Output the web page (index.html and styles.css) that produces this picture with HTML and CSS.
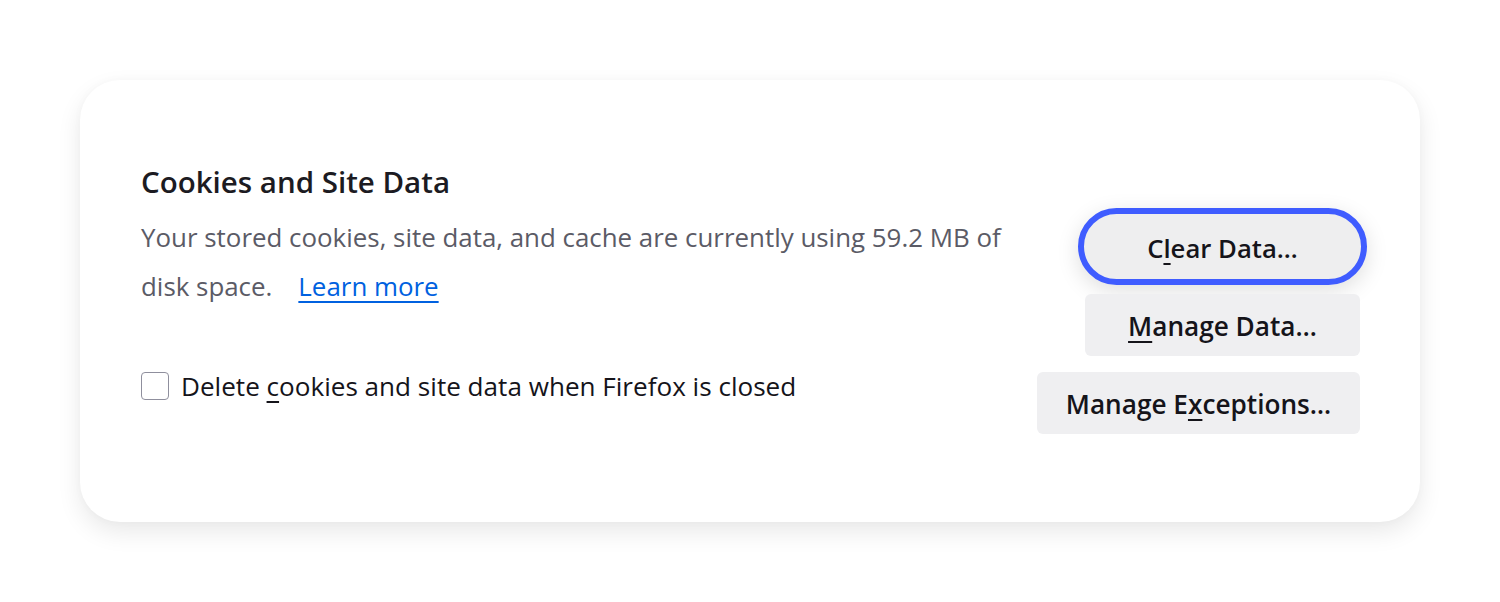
FILE: index.html
```html
<!DOCTYPE html>
<html lang="en">
<head>
<meta charset="utf-8">
<title>Cookies and Site Data</title>
<link rel="stylesheet" href="styles.css">
</head>
<body>
<div class="stage">
  <section class="card">
    <div class="info">
      <h2 class="title">Cookies and Site Data</h2>
      <p class="desc"><span class="desc-line">Your stored cookies, site data, and cache are currently using 59.2 MB of</span><span class="desc-line"><span>disk space.</span><a class="link" href="#">Learn more</a></span></p>
      <label class="check-row">
        <span class="checkbox"></span>
        <span class="check-label">Delete <u>c</u>ookies and site data when Firefox is closed</span>
      </label>
    </div>
    <div class="actions">
      <button class="btn btn-focus">C<u>l</u>ear Data…</button>
      <button class="btn btn-data"><u>M</u>anage Data…</button>
      <button class="btn btn-exc">Manage E<u>x</u>ceptions…</button>
    </div>
  </section>
</div>
</body>
</html>
```
FILE: styles.css
```css
html, body {
  margin: 0;
  padding: 0;
  background: #ffffff;
}
body {
  font-family: "Open Sans", "Noto Sans", sans-serif;
  color: #15141a;
  width: 1500px;
  height: 602px;
  overflow: hidden;
}
.stage {
  padding: 80px 80px 0 80px;
}
.card {
  box-sizing: border-box;
  height: 442px;
  background: #ffffff;
  border-radius: 40px;
  box-shadow: 0 10px 24px rgba(0, 0, 0, 0.09), 0 0 10px rgba(0, 0, 0, 0.025);
  padding: 84px 60px 0 61px;
  display: flex;
  justify-content: space-between;
  align-items: flex-start;
}
.info {
  width: 880px;
}
.title {
  margin: 0;
  font-size: 29.5px;
  font-weight: 600;
  line-height: 36px;
  color: #1c1b22;
}
.desc {
  margin: 13px 0 0 0;
  font-size: 25.9px;
  line-height: 49px;
  color: #5b5b66;
}
.desc-line {
  display: block;
}
.link {
  color: #0061e0;
  text-decoration: underline;
  text-decoration-thickness: 2px;
  text-underline-offset: 5px;
  margin-left: 26px;
}
.check-row {
  display: flex;
  align-items: center;
  gap: 12px;
  margin-top: 60px;
  height: 30px;
}
.checkbox {
  box-sizing: border-box;
  width: 28px;
  height: 28px;
  border: 1.5px solid #8f8f9d;
  border-radius: 4px;
  background: #ffffff;
  flex: none;
}
.check-label {
  font-size: 26.1px;
  color: #15141a;
}
.check-label u, .btn u {
  text-underline-offset: 5px;
  text-decoration-thickness: 2px;
}
.actions {
  display: flex;
  flex-direction: column;
  align-items: flex-end;
  padding-top: 44px;
}
.btn {
  box-sizing: border-box;
  font-family: "Open Sans", "Noto Sans", sans-serif;
  font-size: 26.2px;
  font-weight: 600;
  color: #15141a;
  background: #efeff1;
  border: none;
  border-radius: 6px;
  height: 62px;
  padding: 2px 0 0 0;
  cursor: pointer;
}
.btn-focus {
  width: 289px;
  height: 77px;
  margin-right: -7px;
  border: 6px solid #3f5cff;
  border-radius: 40px;
  background: #eeeeef;
  box-shadow: 0 6px 22px rgba(0, 0, 0, 0.13);
  font-size: 25.7px;
  padding: 4px 0 0 0;
}
.btn-data {
  width: 275px;
  margin-top: 9px;
}
.btn-exc {
  width: 323px;
  margin-top: 16px;
}
```
